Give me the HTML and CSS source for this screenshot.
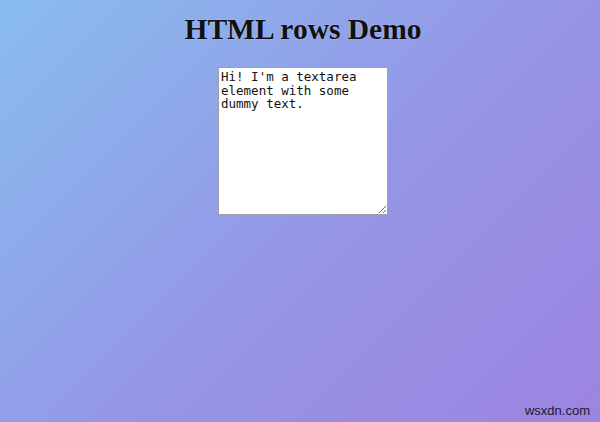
FILE: index.html
```html
<!DOCTYPE html>
<html>
<head>
<meta charset="utf-8">
<link rel="stylesheet" href="styles.css">
</head>
<body>
<main class="page">
  <h1 class="title">HTML rows Demo</h1>
  <textarea class="box" rows="10">Hi! I'm a textarea element with some dummy text.</textarea>
</main>
<div class="mark">wsxdn.com</div>
</body>
</html>
```
FILE: styles.css
```css
html, body {
  margin: 0;
  padding: 0;
  height: 100%;
}
body {
  background: linear-gradient(135deg, #88bdef 0%, #9595e6 55%, #9d84e1 100%);
  overflow: hidden;
  position: relative;
}
.page {
  display: flex;
  flex-direction: column;
  align-items: center;
  padding-left: 6px;
}
.title {
  margin: 13px 0 0;
  font-family: "Liberation Serif", "Times New Roman", serif;
  font-weight: bold;
  font-size: 29.5px;
  color: #111;
  text-shadow: 0 0 2px rgba(255,255,255,0.35);
}
.box {
  margin-top: 21px;
  box-sizing: border-box;
  width: 170px;
  height: 148px;
  padding: 2px;
  border: 1px solid #a0a0a0;
  background: #fff;
  font-family: "DejaVu Sans Mono", monospace;
  font-size: 12.5px;
  line-height: 13.5px;
  color: #111;
  resize: both;
}
.mark {
  position: absolute;
  right: 10px;
  bottom: 4px;
  font-family: "Liberation Sans", Arial, sans-serif;
  font-size: 13px;
  color: #1a1a2e;
}
```
